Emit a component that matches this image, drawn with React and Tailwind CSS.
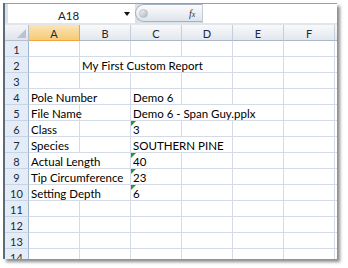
import React from "react";

const COLS = ["A", "B", "C", "D", "E", "F"];

const DATA = {
  2: [{ text: "" }, { span: 3, text: "My First Custom Report" }],
  4: [{ span: 2, text: "Pole Number" }, { text: "Demo 6" }],
  5: [{ text: "File Name" }, { text: "" }, { span: 3, text: "Demo 6 - Span Guy.pplx" }],
  6: [{ text: "Class" }, { text: "" }, { text: "3", tri: true }],
  7: [{ text: "Species" }, { text: "" }, { span: 2, text: "SOUTHERN PINE" }],
  8: [{ span: 2, text: "Actual Length" }, { text: "40", tri: true }],
  9: [{ span: 2, text: "Tip Circumference" }, { text: "23", tri: true }],
  10: [{ span: 2, text: "Setting Depth" }, { text: "6", tri: true }],
};

function buildCells(r) {
  const given = DATA[r] || [];
  const cells = [];
  let used = 0;
  given.forEach((c) => {
    const span = c.span || 1;
    cells.push({ ...c, span });
    used += span;
  });
  while (used < 6) {
    cells.push({ text: "", span: 1 });
    used += 1;
  }
  return cells;
}

const WIDTHS = {
  1: "w-[51px]",
  2: "w-[102px]",
  3: "w-[153px]",
};

function Row({ r }) {
  const cells = buildCells(r);
  return (
    <div className="flex h-[16px] shrink-0">
      <div className="w-[24px] shrink-0 h-full bg-[#e4ecf7] border-r border-b border-r-[#9eb6ce] border-b-[#c5d4e6] flex items-center justify-center text-[11px] text-[#1c2a3a] leading-none pt-px">
        {r}
      </div>
      {cells.map((c, i) => (
        <div
          key={i}
          className={`${WIDTHS[c.span]} shrink-0 h-full relative border-r border-b border-[#d4dbe6] flex items-end pl-[2px] pb-[1px] text-[11.5px] leading-none text-black whitespace-nowrap`}
        >
          {c.tri && (
            <div className="absolute left-0 top-0 w-0 h-0 border-t-[5px] border-r-[5px] border-t-[#1f9a3a] border-r-transparent" />
          )}
          {c.text}
        </div>
      ))}
      <div className="flex-1 h-full border-b border-[#d4dbe6]" />
    </div>
  );
}

export default function App() {
  const rows = Array.from({ length: 14 }, (_, i) => i + 1);
  return (
    <div
      className="w-[348px] h-[268px] bg-white overflow-hidden pt-[3px] pl-[3px]"
      style={{ fontFamily: "Lato, 'Liberation Sans', sans-serif" }}
    >
      <div className="w-[334px] h-[256px] bg-white flex flex-col overflow-hidden border-l-2 border-[#5f6b7a] shadow-[3px_3px_3px_rgba(0,0,0,0.45)]">
        {/* formula bar */}
        <div className="h-[20px] shrink-0 flex bg-[#d9e1eb] border-t border-[#8ea1b7]">
          <div className="w-[3px] shrink-0" />
          <div className="w-[125px] shrink-0 h-full bg-white flex items-center relative">
            <span className="absolute left-[50px] top-[3px] text-[11.5px] text-[#222]">A18</span>
            <span className="absolute left-[116px] top-[8px] w-0 h-0 border-l-[3px] border-r-[3px] border-t-[4px] border-l-transparent border-r-transparent border-t-[#111]" />
          </div>
          <div className="w-[2px] shrink-0 bg-white" />
          <div className="w-[67px] shrink-0 h-[18px] rounded-l-full border border-r-0 border-[#a5b2c2] bg-gradient-to-b from-[#fbfcfd] to-[#dfe4ea] relative">
            <div className="absolute left-[3px] top-[4px] w-[9px] h-[9px] rounded-full bg-gradient-to-br from-[#f4f6f8] to-[#aeb6c0] border border-[#b8c0ca]" />
            <span
              className="absolute left-[53px] top-[1px] text-[10px] italic text-[#333]"
              style={{ fontFamily: "'Liberation Serif', serif" }}
            >
              f<span className="text-[8px]">x</span>
            </span>
          </div>
          <div className="w-px shrink-0 bg-[#c3ccd7]" />
          <div className="flex-1 h-full bg-white" />
        </div>
        <div className="h-[2px] shrink-0 bg-[#e2e6eb]" />
        {/* header row */}
        <div className="flex h-[16px] shrink-0">
          <div className="w-[24px] shrink-0 h-full relative bg-gradient-to-b from-[#f4f6f9] to-[#dfe4eb] border-r border-b border-[#b3bfcc]">
            <svg className="absolute right-[2px] bottom-[2px]" width="9" height="9" viewBox="0 0 9 9">
              <path d="M9 0 L9 9 L0 9 Z" fill="#b9c3cf" />
            </svg>
          </div>
          {COLS.map((c) => (
            <div
              key={c}
              className={`w-[51px] shrink-0 h-full flex items-center justify-center text-[11px] leading-none pt-px border-r border-b ${
                c === "A"
                  ? "bg-gradient-to-b from-[#fbe4b3] to-[#f6ca78] border-[#f2a33a] text-[#1c2a3a]"
                  : "bg-gradient-to-b from-[#f8f9fb] to-[#e3e7ed] border-r-[#c6ced8] border-b-[#aab8c8] text-[#1c2a3a]"
              }`}
            >
              {c}
            </div>
          ))}
          <div className="flex-1 h-full bg-gradient-to-b from-[#f8f9fb] to-[#e3e7ed] border-b border-[#aab8c8]" />
        </div>
        {rows.map((r) => (
          <Row key={r} r={r} />
        ))}
      </div>
    </div>
  );
}
